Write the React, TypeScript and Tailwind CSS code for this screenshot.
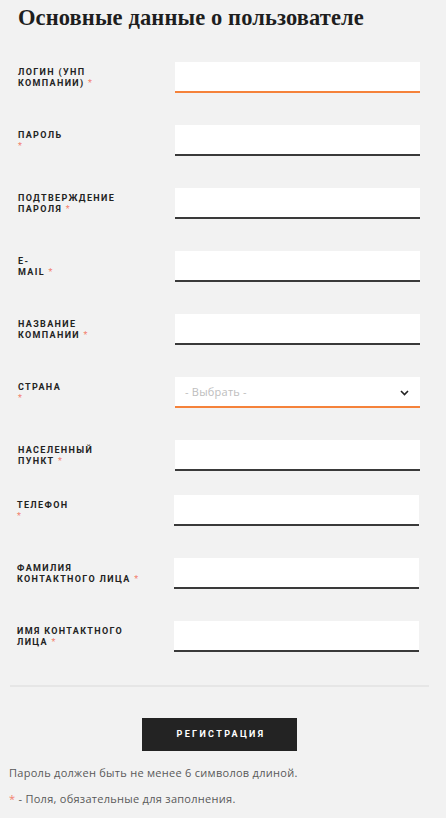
import React from 'react';

type Field = {
  lines: string[];
  select?: boolean;
  active?: boolean;
};

const fieldsTop: Field[] = [
  { lines: ['ЛОГИН (УНП', 'КОМПАНИИ)'], active: true },
  { lines: ['ПАРОЛЬ', ''] },
  { lines: ['ПОДТВЕРЖДЕНИЕ', 'ПАРОЛЯ'] },
  { lines: ['E-', 'MAIL'] },
  { lines: ['НАЗВАНИЕ', 'КОМПАНИИ'] },
  { lines: ['СТРАНА', ''], select: true },
  { lines: ['НАСЕЛЕННЫЙ', 'ПУНКТ'] },
];

const fieldsBottom: Field[] = [
  { lines: ['ТЕЛЕФОН', ''] },
  { lines: ['ФАМИЛИЯ', 'КОНТАКТНОГО ЛИЦА'] },
  { lines: ['ИМЯ КОНТАКТНОГО', 'ЛИЦА'] },
];

const Row: React.FC<{ field: Field }> = ({ field }) => {
  const border = field.active || field.select ? 'border-[#f5823a]' : 'border-[#3a3a3a]';
  return (
    <div className="flex items-start h-[63px]">
      <div className="w-[157px] pt-[5px] text-[9px] leading-[11px] font-bold tracking-[0.15em] text-[#232323]">
        <div>{field.lines[0]}</div>
        <div>
          {field.lines[1]}
          {field.lines[1] ? ' ' : ''}
          <span className="text-[#f3806e] font-normal">*</span>
        </div>
      </div>
      <div className={`w-[245px] h-[31px] bg-white border-b-2 ${border} flex items-center`}>
        {field.select && (
          <div className="flex w-full items-center justify-between pl-[10px] pr-[11px] pt-[2px]">
            <span className="text-[11px] text-[#bdbdbd] tracking-[0.02em] font-['Open_Sans',sans-serif]">- Выбрать -</span>
            <svg width="9" height="6" viewBox="0 0 9 6" fill="none">
              <path d="M1 1l3.5 3.5L8 1" stroke="#222" strokeWidth="1.6" />
            </svg>
          </div>
        )}
      </div>
    </div>
  );
};

export default function App() {
  return (
    <div className="min-h-[818px] w-[446px] bg-[#f2f2f2] font-['Roboto',sans-serif] overflow-hidden">
      <h1 className="pl-[18px] pt-[4px] text-[22.5px] leading-[28px] font-bold tracking-[0.005em] text-[#1e1e1e] font-['Liberation_Serif',serif]">
        Основные данные о пользователе
      </h1>
      <div className="pl-[18px] mt-[30px]">
        {fieldsTop.map((f, i) => (
          <Row key={i} field={f} />
        ))}
      </div>
      <div className="pl-[17px] -mt-[8px]">
        {fieldsBottom.map((f, i) => (
          <Row key={i} field={f} />
        ))}
      </div>
      <div className="mx-[10px] w-[419px] mt-[1px] h-[2px] bg-[#e6e6e6]" />
      <div className="flex justify-center pl-[10px] pr-[17px] pt-[31px]">
        <button className="w-[155px] h-[33px] bg-[#232323] text-white text-[9px] font-bold tracking-[0.26em] pl-[3px]">
          РЕГИСТРАЦИЯ
        </button>
      </div>
      <p className="pl-[9px] mt-[14px] text-[11px] leading-[16px] tracking-[0.025em] text-[#595959] font-['Open_Sans',sans-serif]">
        Пароль должен быть не менее 6 символов длиной.
      </p>
      <p className="pl-[9px] mt-[10px] text-[11px] leading-[16px] tracking-[0.025em] text-[#595959] font-['Open_Sans',sans-serif]">
        <span className="text-[#f3806e]">*</span> - Поля, обязательные для заполнения.
      </p>
    </div>
  );
}
